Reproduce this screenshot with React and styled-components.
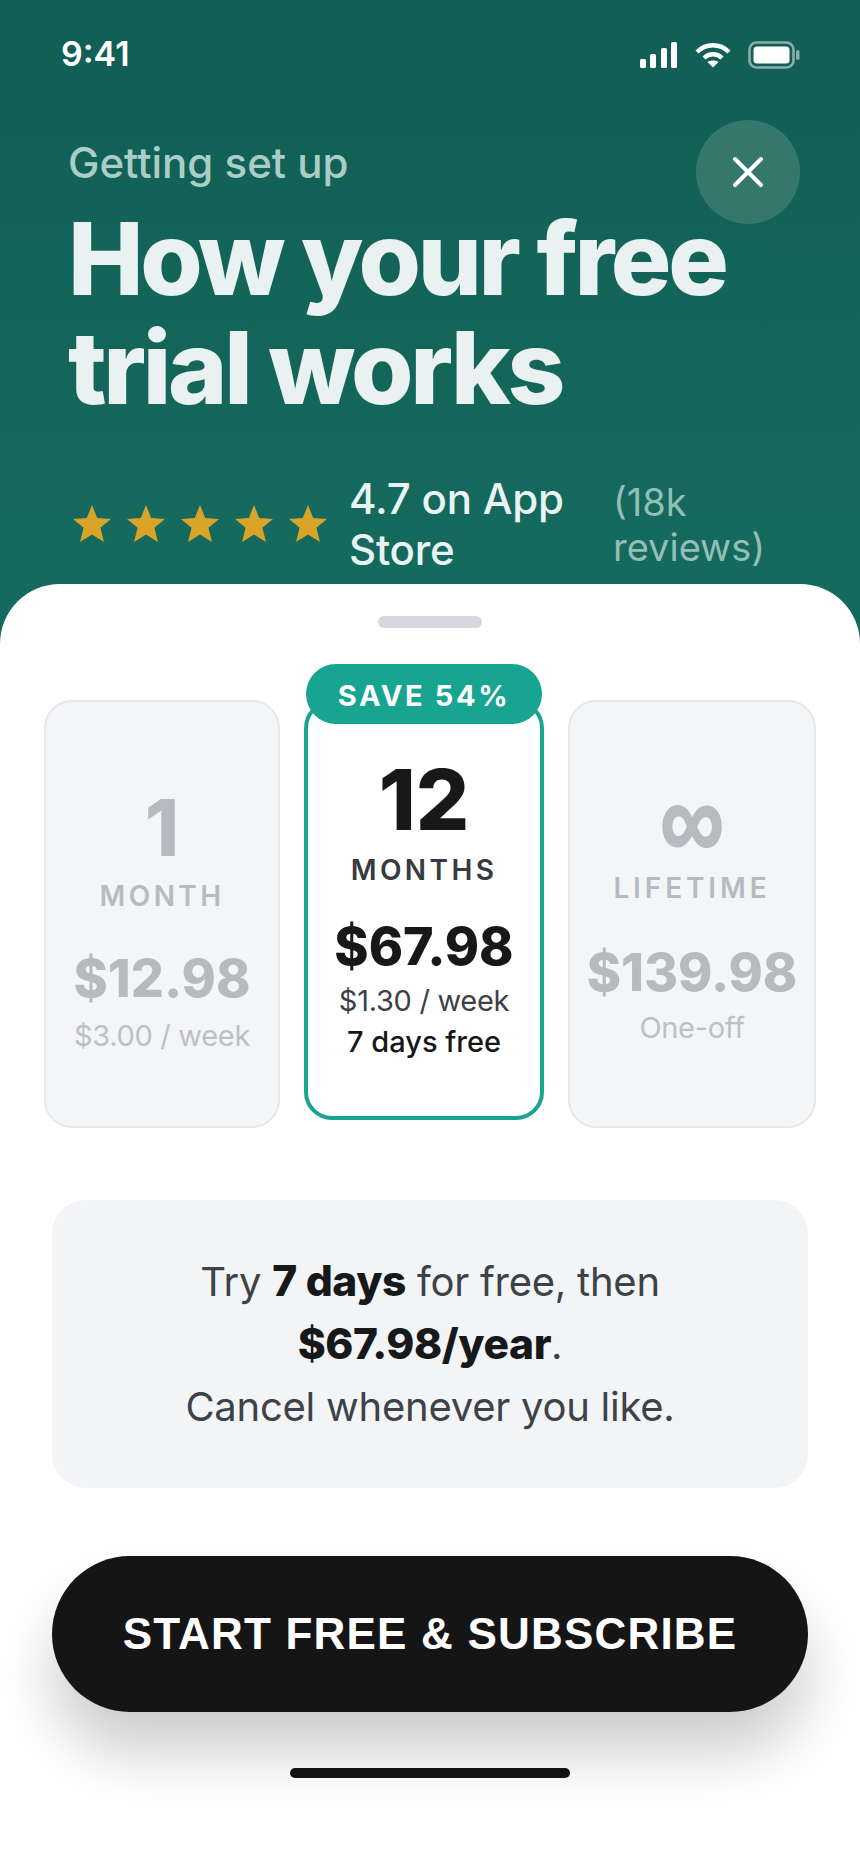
import React from 'react'
import styled, {createGlobalStyle} from 'styled-components'

const Global = createGlobalStyle`
  html, body {
    margin: 0;
    padding: 0;
    background: #fff;
  }
  * { box-sizing: border-box; }
`

const Screen = styled.div`
  width: 860px;
  height: 1864px;
  overflow: hidden;
  font-family: Inter, "Noto Sans", sans-serif;
  background: linear-gradient(to bottom, #115e54 0, #156a5e 584px, #156a5e 100%);
  position: relative;
`
const Header = styled.div`
  height: 584px;
  position: relative;
  overflow: hidden;
`
const StatusBar = styled.div`
  height: 110px;
  padding: 37px 60px 0 61px;
  display: flex;
  justify-content: space-between;
  align-items: flex-start;
`
const Time = styled.div`
  font-size: 34px;
  line-height: 34px;
  font-weight: 600;
  color: #fff;
`
const StatusIcons = styled.div`
  display: flex;
  align-items: center;
  gap: 17px;
  height: 34px;
  padding-top: 2px;
`
const Intro = styled.div`
  padding: 30px 0 0 68px;
`
const Eyebrow = styled.div`
  font-size: 42px;
  line-height: 46px;
  font-weight: 500;
  color: #aacdc7;
`
const Title = styled.h1`
  margin: 18px 0 0 0;
  font-size: 101px;
  line-height: 109px;
  font-weight: 800;
  letter-spacing: -3.3px;
  color: #e9f1f1;
`
const CloseButton = styled.div`
  position: absolute;
  left: 696px;
  top: 120px;
  width: 104px;
  height: 104px;
  border-radius: 50%;
  background: #35776d;
  display: flex;
  align-items: center;
  justify-content: center;
`
const Rating = styled.div`
  display: flex;
  align-items: center;
  padding-left: 73px;
  margin-top: 51px;
`
const Stars = styled.div`
  display: flex;
  gap: 16px;
  width: 276px;
`
const RatingText = styled.div`
  width: 264px;
  font-size: 42px;
  line-height: 51px;
  font-weight: 500;
  letter-spacing: -0.2px;
  color: #e9f4f2;
`
const Reviews = styled.div`
  width: 170px;
  padding-top: 2px;
  font-size: 38px;
  line-height: 45px;
  color: #93bfb8;
`

const Sheet = styled.div`
  height: 1280px;
  background: #fff;
  border-radius: 60px 60px 0 0;
  padding-top: 32px;
  position: relative;
`
const Handle = styled.div`
  width: 104px;
  height: 12px;
  border-radius: 6px;
  background: #d5d8dc;
  margin: 0 auto;
`
const Plans = styled.div`
  display: flex;
  align-items: flex-start;
  margin-top: 72px;
  padding-left: 44px;
`
const Plan = styled.div`
  position: relative;
  flex: none;
  width: ${props => props.$width}px;
  height: ${props => props.$featured ? 420 : 428}px;
  margin-right: ${props => props.$gap}px;
  border-radius: 28px;
  border: ${props => props.$featured ? '4px solid #17a490' : '2px solid #e5e7ea'};
  background: ${props => props.$featured ? '#fff' : '#f3f5f7'};
  padding-top: ${props => props.$top}px;
  display: flex;
  flex-direction: column;
  align-items: center;
  text-align: center;
`
const Badge = styled.div`
  position: absolute;
  left: -2px;
  top: -40px;
  width: 236px;
  height: 60px;
  border-radius: 30px;
  background: #17a490;
  color: #fff;
  font-size: 29px;
  line-height: 63px;
  font-weight: 700;
  letter-spacing: 2.6px;
  text-align: center;
`
const Amount = styled.div`
  font-size: ${props => props.$featured ? 84 : 78}px;
  line-height: 78px;
  font-weight: 800;
  color: ${props => props.$featured ? '#16181a' : '#b7bbc0'};
`
const InfinityMark = styled.div`
  font-family: "Liberation Sans", Arial, sans-serif;
  font-size: 90px;
  line-height: 60px;
  font-weight: 700;
  color: #b7bbc0;
  -webkit-text-stroke: 1.5px #b7bbc0;
  transform: scaleY(1.25);
`
const Unit = styled.div`
  margin-top: ${props => props.$space}px;
  font-size: 28px;
  line-height: 34px;
  font-weight: 600;
  letter-spacing: ${props => props.$wide ? 3.9 : 3.4}px;
  color: ${props => props.$featured ? '#373a40' : '#b7bbc0'};
`
const Price = styled.div`
  margin-top: ${props => props.$space}px;
  font-size: 52px;
  line-height: 64px;
  font-weight: 800;
  color: ${props => props.$featured ? '#16181a' : '#b7bbc0'};
`
const PerWeek = styled.div`
  margin-top: ${props => props.$space}px;
  font-size: 29px;
  line-height: 38px;
  letter-spacing: -0.3px;
  color: ${props => props.$featured ? '#3d4047' : '#bcc0c5'};
`
const FreeNote = styled.div`
  margin-top: 3px;
  font-size: 29px;
  line-height: 38px;
  font-weight: 500;
  color: #16181a;
`

const InfoBox = styled.div`
  margin: 72px 52px 0;
  height: 288px;
  border-radius: 34px;
  background: #f2f4f6;
  padding-top: 50px;
  text-align: center;
  font-size: 40px;
  line-height: 62px;
  letter-spacing: -0.25px;
  color: #3d4249;
  b {
    font-size: 42.5px;
    font-weight: 800;
    letter-spacing: -0.4px;
    color: #16181a;
  }
`
const StartButton = styled.div`
  margin: 68px 52px 0;
  height: 156px;
  border-radius: 78px;
  background: #151515;
  box-shadow: 0 40px 60px rgba(0, 0, 0, 0.2);
  color: #fff;
  display: flex;
  align-items: center;
  justify-content: center;
  font-family: "Liberation Sans", Arial, sans-serif;
  font-size: 44px;
  font-weight: 700;
  letter-spacing: 1.2px;
`
const HomeBar = styled.div`
  width: 280px;
  height: 10px;
  border-radius: 5px;
  background: #111;
  margin: 56px auto 0;
  position: relative;
`

const Star = () => <svg width='38' height='38' viewBox='0 0 38 38'>
  <path d='M19 0 L24.2 13 L38 14 L27.4 22.8 L31 37 L19 29.4 L7 37 L10.6 22.8 L0 14 L13.8 13 Z' fill='#d9a528' />
</svg>

const SignalIcon = () => <svg width='38' height='26' viewBox='0 0 38 26' fill='#fff'>
  <rect x='0' y='17' width='6' height='9' rx='1.5' />
  <rect x='10' y='12' width='6' height='14' rx='1.5' />
  <rect x='21' y='6' width='6' height='20' rx='1.5' />
  <rect x='31' y='0' width='6' height='26' rx='1.5' />
</svg>

const WifiIcon = () => <svg width='36' height='26' viewBox='0 0 36 26' fill='none' stroke='#fff' strokeWidth='4.4'>
  <path d='M2 10 C11 1, 25 1, 34 10' />
  <path d='M9 16 C14 11, 22 11, 27 16' />
  <path d='M18 25.5 L12.5 20 C15.5 18, 20.5 18, 23.5 20 Z' fill='#fff' stroke='none' />
</svg>

const BatteryIcon = () => <svg width='52' height='28' viewBox='0 0 52 28'>
  <rect x='1.5' y='1.5' width='44' height='25' rx='7' fill='none' stroke='#fff' strokeOpacity='0.5' strokeWidth='2.6' />
  <rect x='5.5' y='5.5' width='36' height='17' rx='3.5' fill='#fff' />
  <rect x='48' y='9' width='3.5' height='10' rx='1.7' fill='#fff' fillOpacity='0.5' />
</svg>

const App = () => <Screen>
  <Global />
  <Header>
    <StatusBar>
      <Time>9:41</Time>
      <StatusIcons>
        <SignalIcon />
        <WifiIcon />
        <BatteryIcon />
      </StatusIcons>
    </StatusBar>
    <CloseButton>
      <svg width='32' height='32' viewBox='0 0 32 32' stroke='#fff' strokeWidth='4' strokeLinecap='round'>
        <path d='M3 3 L29 29 M29 3 L3 29' />
      </svg>
    </CloseButton>
    <Intro>
      <Eyebrow>Getting set up</Eyebrow>
      <Title>How your free<br />trial works</Title>
    </Intro>
    <Rating>
      <Stars>
        <Star /><Star /><Star /><Star /><Star />
      </Stars>
      <RatingText>4.7 on App Store</RatingText>
      <Reviews>(18k reviews)</Reviews>
    </Rating>
  </Header>
  <Sheet>
    <Handle />
    <Plans>
      <Plan $width={236} $gap={24} $top={87}>
        <Amount>1</Amount>
        <Unit $space={12}>MONTH</Unit>
        <Price $space={34}>$12.98</Price>
        <PerWeek $space={6}>$3.00 / week</PerWeek>
      </Plan>
      <Plan $width={240} $gap={24} $top={57} $featured>
        <Badge>SAVE 54%</Badge>
        <Amount $featured>12</Amount>
        <Unit $space={14} $featured>MONTHS</Unit>
        <Price $space={28} $featured>$67.98</Price>
        <PerWeek $space={3} $featured>$1.30 / week</PerWeek>
        <FreeNote>7 days free</FreeNote>
      </Plan>
      <Plan $width={248} $gap={0} $top={88}>
        <InfinityMark>∞</InfinityMark>
        <Unit $space={21} $wide>LIFETIME</Unit>
        <Price $space={36}>$139.98</Price>
        <PerWeek $space={4}>One-off</PerWeek>
      </Plan>
    </Plans>
    <InfoBox>
      Try <b>7 days</b> for free, then<br />
      <b>$67.98/year</b>.<br />
      Cancel whenever you like.
    </InfoBox>
    <StartButton>START FREE &amp; SUBSCRIBE</StartButton>
    <HomeBar />
  </Sheet>
</Screen>

export default App
